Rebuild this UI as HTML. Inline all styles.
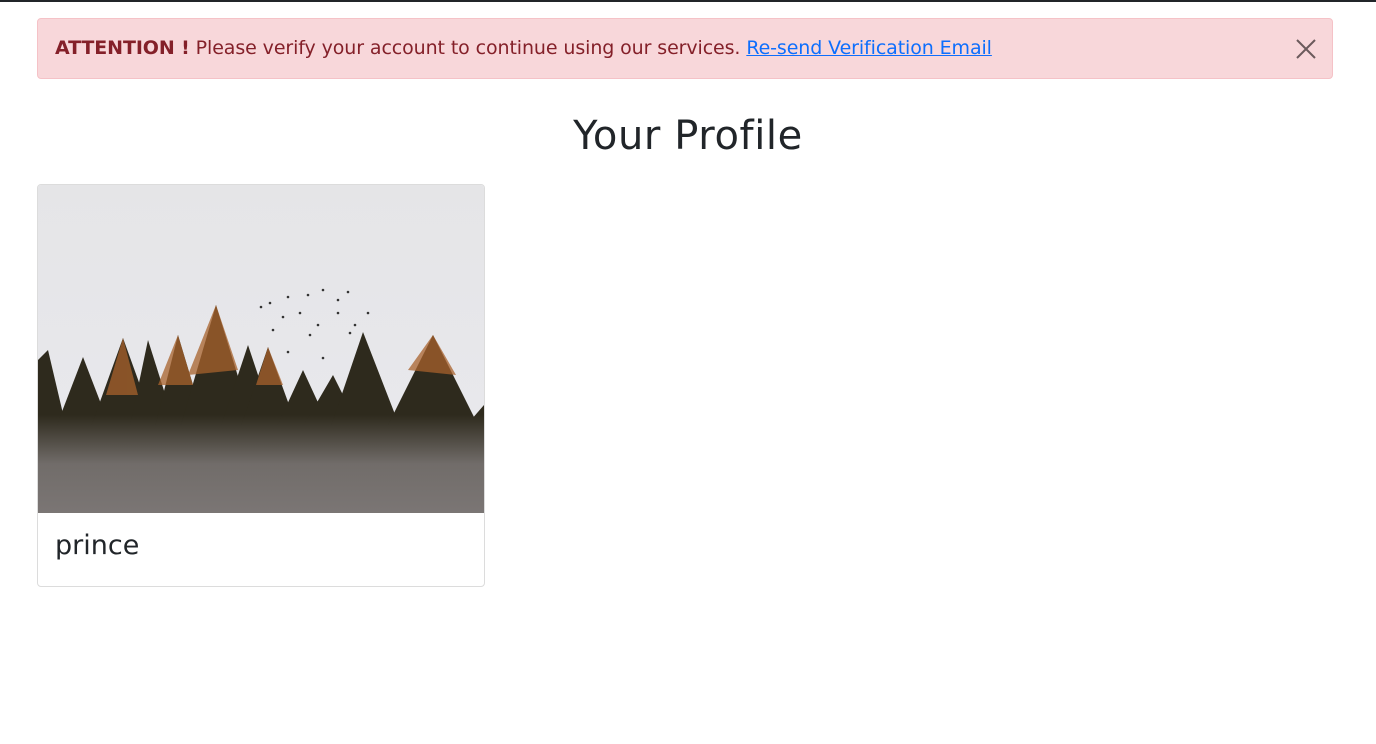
<!DOCTYPE html>
<html><head><meta charset="utf-8"><style>
body{margin:0;background:#fff;font-family:"DejaVu Sans","Liberation Sans",sans-serif;width:1376px;height:744px;overflow:hidden;position:relative}
.top{position:absolute;left:0;top:0;width:1376px;height:2px;background:#212529}
.alert{position:absolute;left:37px;top:18px;width:1296px;height:61px;background:#f8d7da;border:1px solid #f5c2c7;border-radius:4px;box-sizing:border-box;color:#842029;font-size:19px;line-height:59px;padding-left:17px;white-space:nowrap;letter-spacing:-0.1px}
.alert b{font-weight:bold}
.alert a{color:#0d6efd;text-decoration:underline}
.x{position:absolute;right:16px;top:20px}
h1{position:absolute;left:0;width:1376px;top:110px;margin:0;text-align:center;font-weight:normal;font-size:40px;color:#212529;line-height:52px;letter-spacing:0.6px}
.card{position:absolute;left:37px;top:184px;width:448px;height:403px;border:1px solid #dcdcdc;border-radius:4px;box-sizing:border-box;overflow:hidden}
.card svg{display:block}
.name{position:absolute;left:17px;top:345px;font-size:27px;color:#212529}
</style></head><body>
<div class="top"></div>
<div class="alert"><b>ATTENTION !</b> Please verify your account to continue using our services. <a>Re-send Verification Email</a>
<svg class="x" width="20" height="20" viewBox="0 0 20 20"><path d="M1 1L19 19M19 1L1 19" stroke="#6b5a5c" stroke-width="2"/></svg></div>
<h1>Your Profile</h1>
<div class="card">
<svg width="446" height="328" viewBox="0 0 446 328">
<defs>
<linearGradient id="sky" x1="0" y1="0" x2="0" y2="1"><stop offset="0" stop-color="#e5e5e7"/><stop offset="1" stop-color="#e9e9ee"/></linearGradient>
<linearGradient id="fog" x1="0" y1="0" x2="0" y2="1"><stop offset="0" stop-color="#7d7877" stop-opacity="0"/><stop offset="0.5" stop-color="#7d7877" stop-opacity="0.85"/><stop offset="1" stop-color="#7d7877" stop-opacity="0.97"/></linearGradient>
</defs>
<rect width="446" height="328" fill="url(#sky)"/>
<g fill="#2e2a1d">
<polygon points="0,175 10,165 30,250 0,250"/>
<polygon points="15,250 45,172 75,250"/>
<polygon points="50,250 85,153 120,250"/>
<polygon points="90,250 110,155 140,250"/>
<polygon points="115,250 140,150 170,250"/>
<polygon points="140,250 178,120 218,250"/>
<polygon points="180,250 210,160 240,250"/>
<polygon points="200,250 230,162 262,250"/>
<polygon points="235,250 265,185 295,250"/>
<polygon points="260,250 295,190 325,250"/>
<polygon points="290,250 325,147 365,250"/>
<polygon points="345,250 395,150 445,250"/>
<polygon points="420,250 446,220 446,250"/>
<rect x="0" y="240" width="446" height="88"/>
</g>
<g fill="#a8622c" opacity="0.75">
<polygon points="150,190 178,120 200,185"/>
<polygon points="370,185 395,150 418,190"/>
<polygon points="68,210 85,153 100,210"/>
<polygon points="120,200 140,150 155,200"/>
<polygon points="218,200 230,162 245,200"/>
</g>
<g fill="#333">
<circle cx="232" cy="118" r="1.3"/><circle cx="250" cy="112" r="1.3"/><circle cx="270" cy="110" r="1.3"/><circle cx="285" cy="105" r="1.3"/><circle cx="300" cy="115" r="1.3"/><circle cx="245" cy="132" r="1.3"/><circle cx="262" cy="128" r="1.3"/><circle cx="280" cy="140" r="1.3"/><circle cx="300" cy="128" r="1.3"/><circle cx="317" cy="140" r="1.3"/><circle cx="330" cy="128" r="1.3"/><circle cx="310" cy="107" r="1.3"/><circle cx="235" cy="145" r="1.3"/><circle cx="272" cy="150" r="1.3"/><circle cx="250" cy="167" r="1.3"/><circle cx="285" cy="173" r="1.3"/><circle cx="312" cy="148" r="1.3"/><circle cx="223" cy="122" r="1.3"/>
</g>
<rect y="230" width="446" height="98" fill="url(#fog)"/>
</svg>
<div class="name">prince</div>
</div>
</body></html>
